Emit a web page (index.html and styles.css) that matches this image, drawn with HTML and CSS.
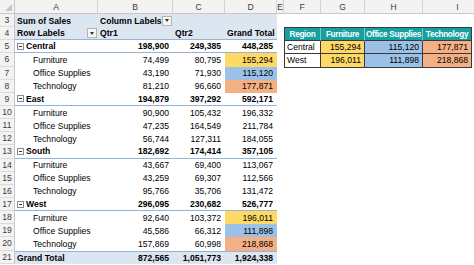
FILE: index.html
```html
<!DOCTYPE html>
<html lang="en">
<head>
    <meta charset="UTF-8">
    <title>Sum of Sales</title>
    <link rel="stylesheet" href="styles.css">
</head>
<body>
    <div class="sheet">
        <div class="colhead">
            <div class="corner"></div>
            <div>A</div>
            <div>B</div>
            <div>C</div>
            <div>D</div>
            <div>E</div>
            <div>F</div>
            <div>G</div>
            <div>H</div>
            <div class="col-i">I</div>
        </div>

        <div class="body">
            <div class="rownums">
                <div>3</div><div>4</div><div>5</div><div>6</div><div>7</div>
                <div>8</div><div>9</div><div>10</div><div>11</div><div>12</div>
                <div>13</div><div>14</div><div>15</div><div>16</div><div>17</div>
                <div>18</div><div>19</div><div>20</div><div>21</div>
            </div>

            <!-- pivot table -->
            <div class="pivot">
                <div class="prow hdr">
                    <div class="lbl">Sum of Sales</div>
                    <div class="lbl split">Column Labels <span class="dd"></span></div>
                    <div></div>
                    <div></div>
                </div>
                <div class="prow hdr hdr-last">
                    <div class="lbl split">Row Labels <span class="dd"></span></div>
                    <div class="lbl">Qtr1</div>
                    <div class="lbl">Qtr2</div>
                    <div class="lbl">Grand Total</div>
                </div>

                <div class="prow sub">
                    <div class="lbl"><span class="toggle"></span>Central</div>
                    <div class="num">198,900</div><div class="num">249,385</div><div class="num">448,285</div>
                </div>
                <div class="prow">
                    <div class="item">Furniture</div>
                    <div class="num">74,499</div><div class="num">80,795</div><div class="num yellow">155,294</div>
                </div>
                <div class="prow">
                    <div class="item">Office Supplies</div>
                    <div class="num">43,190</div><div class="num">71,930</div><div class="num blue">115,120</div>
                </div>
                <div class="prow">
                    <div class="item">Technology</div>
                    <div class="num">81,210</div><div class="num">96,660</div><div class="num orange">177,871</div>
                </div>

                <div class="prow sub">
                    <div class="lbl"><span class="toggle"></span>East</div>
                    <div class="num">194,879</div><div class="num">397,292</div><div class="num">592,171</div>
                </div>
                <div class="prow">
                    <div class="item">Furniture</div>
                    <div class="num">90,900</div><div class="num">105,432</div><div class="num">196,332</div>
                </div>
                <div class="prow">
                    <div class="item">Office Supplies</div>
                    <div class="num">47,235</div><div class="num">164,549</div><div class="num">211,784</div>
                </div>
                <div class="prow">
                    <div class="item">Technology</div>
                    <div class="num">56,744</div><div class="num">127,311</div><div class="num">184,055</div>
                </div>

                <div class="prow sub">
                    <div class="lbl"><span class="toggle"></span>South</div>
                    <div class="num">182,692</div><div class="num">174,414</div><div class="num">357,105</div>
                </div>
                <div class="prow">
                    <div class="item">Furniture</div>
                    <div class="num">43,667</div><div class="num">69,400</div><div class="num">113,067</div>
                </div>
                <div class="prow">
                    <div class="item">Office Supplies</div>
                    <div class="num">43,259</div><div class="num">69,307</div><div class="num">112,566</div>
                </div>
                <div class="prow">
                    <div class="item">Technology</div>
                    <div class="num">95,766</div><div class="num">35,706</div><div class="num">131,472</div>
                </div>

                <div class="prow sub">
                    <div class="lbl"><span class="toggle"></span>West</div>
                    <div class="num">296,095</div><div class="num">230,682</div><div class="num">526,777</div>
                </div>
                <div class="prow">
                    <div class="item">Furniture</div>
                    <div class="num">92,640</div><div class="num">103,372</div><div class="num yellow">196,011</div>
                </div>
                <div class="prow">
                    <div class="item">Office Supplies</div>
                    <div class="num">45,586</div><div class="num">66,312</div><div class="num blue">111,898</div>
                </div>
                <div class="prow">
                    <div class="item">Technology</div>
                    <div class="num">157,869</div><div class="num">60,998</div><div class="num orange">218,868</div>
                </div>

                <div class="prow total">
                    <div class="lbl">Grand Total</div>
                    <div class="num">872,565</div><div class="num">1,051,773</div><div class="num">1,924,338</div>
                </div>
            </div>

            <div class="col-e"></div>

            <!-- region summary -->
            <div class="side">
                <div class="srow shead">
                    <div>Region</div>
                    <div>Furniture</div>
                    <div>Office Supplies</div>
                    <div>Technology</div>
                </div>
                <div class="srow">
                    <div class="name">Central</div>
                    <div class="num yellow">155,294</div>
                    <div class="num blue">115,120</div>
                    <div class="num orange">177,871</div>
                </div>
                <div class="srow">
                    <div class="name">West</div>
                    <div class="num yellow">196,011</div>
                    <div class="num blue">111,898</div>
                    <div class="num orange">218,868</div>
                </div>
            </div>
        </div>
    </div>
</body>
</html>
```

FILE: styles.css
```css
body {
    margin: 0;
    background: #ffffff;
    font-family: "Liberation Sans", Arial, sans-serif;
    font-size: 8.6px;
    color: #000;
}

.sheet {
    width: 474px;
    height: 265px;
    overflow: hidden;
}

/* column letters */
.colhead {
    display: grid;
    grid-template-columns: 15px 83px 75px 52px 52px 7px 37px 44px 58px 1fr;
    height: 14px;
    background: #f3f3f3;
    border-bottom: 1px solid #c8c8c8;
    box-sizing: border-box;
}

.colhead div {
    display: flex;
    align-items: center;
    justify-content: center;
    border-right: 1px solid #d4d4d4;
    color: #3c3c3c;
    font-size: 8.6px;
}

.colhead .col-i {
    padding-left: 18px;
    border-right: none;
}

.colhead .corner {
    align-items: flex-end;
    justify-content: flex-end;
    padding: 0 2px 2px 0;
    border-right: 1px solid #c8c8c8;
}

.corner::after {
    content: "";
    border-left: 7px solid transparent;
    border-bottom: 7px solid #c6c6c6;
}

.body {
    display: flex;
}

/* row numbers */
.rownums {
    width: 15px;
    flex-shrink: 0;
    background: #f3f3f3;
    border-right: 1px solid #c8c8c8;
    box-sizing: border-box;
}

.rownums div {
    height: 13.15px;
    box-sizing: border-box;
    border-bottom: 1px solid #dcdcdc;
    display: flex;
    align-items: center;
    justify-content: center;
    color: #3c3c3c;
}

/* pivot */
.pivot {
    width: 262px;
    flex-shrink: 0;
}

.prow {
    display: grid;
    grid-template-columns: 83px 75px 52px 52px;
    height: 13.15px;
    box-sizing: border-box;
}

.prow > div {
    display: flex;
    align-items: center;
    white-space: nowrap;
    overflow: hidden;
}

.lbl {
    padding-left: 2px;
}

.split {
    justify-content: space-between;
    padding-right: 1px;
}

.item {
    padding-left: 18px;
}

.num {
    justify-content: flex-end;
    padding-right: 4px;
}

.hdr {
    background: #dce6f1;
    font-weight: bold;
}

.hdr-last {
    border-bottom: 1px solid #95b3d7;
}

.sub {
    font-weight: bold;
    border-bottom: 1px solid #95b3d7;
}

.total {
    font-weight: bold;
    background: #dce6f1;
    border-top: 1px solid #95b3d7;
}

.prow > .yellow,
.srow > .yellow {
    background: #ffd966;
}

.prow > .blue,
.srow > .blue {
    background: #9bc2e6;
}

.prow > .orange,
.srow > .orange {
    background: #f4b084;
}

.toggle {
    display: inline-flex;
    align-items: center;
    justify-content: center;
    width: 5px;
    height: 5px;
    border: 1px solid #8c8c8c;
    margin-right: 2px;
    background: #fff;
}

.toggle::before {
    content: "";
    width: 3px;
    height: 1px;
    background: #333;
}

.dd {
    display: inline-flex;
    align-items: center;
    justify-content: center;
    width: 8px;
    height: 8px;
    border: 1px solid #b4b4b4;
    background: #f6f6f6;
}

.dd::before {
    content: "";
    border-left: 2.5px solid transparent;
    border-right: 2.5px solid transparent;
    border-top: 3px solid #333;
}

.col-e {
    width: 7px;
    flex-shrink: 0;
}

/* region table */
.side {
    margin-top: 13.15px;
    border-top: 1px solid #3a3a3a;
    border-left: 1px solid #3a3a3a;
    align-self: flex-start;
}

.srow {
    display: grid;
    grid-template-columns: 36px 44px 58px 49px;
    height: 13.15px;
}

.srow > div {
    display: flex;
    align-items: center;
    white-space: nowrap;
    overflow: hidden;
    border-right: 1px solid #3a3a3a;
    border-bottom: 1px solid #3a3a3a;
}

.shead > div {
    background: #17a0a0;
    color: #ffffff;
    font-weight: bold;
    font-size: 8.2px;
    letter-spacing: -0.3px;
    justify-content: center;
    border-right-color: #7cc9c9;
}

.shead > div:last-child {
    border-right-color: #3a3a3a;
}

.srow .name {
    padding-left: 2px;
}

.srow .num {
    padding-right: 3px;
}
```
